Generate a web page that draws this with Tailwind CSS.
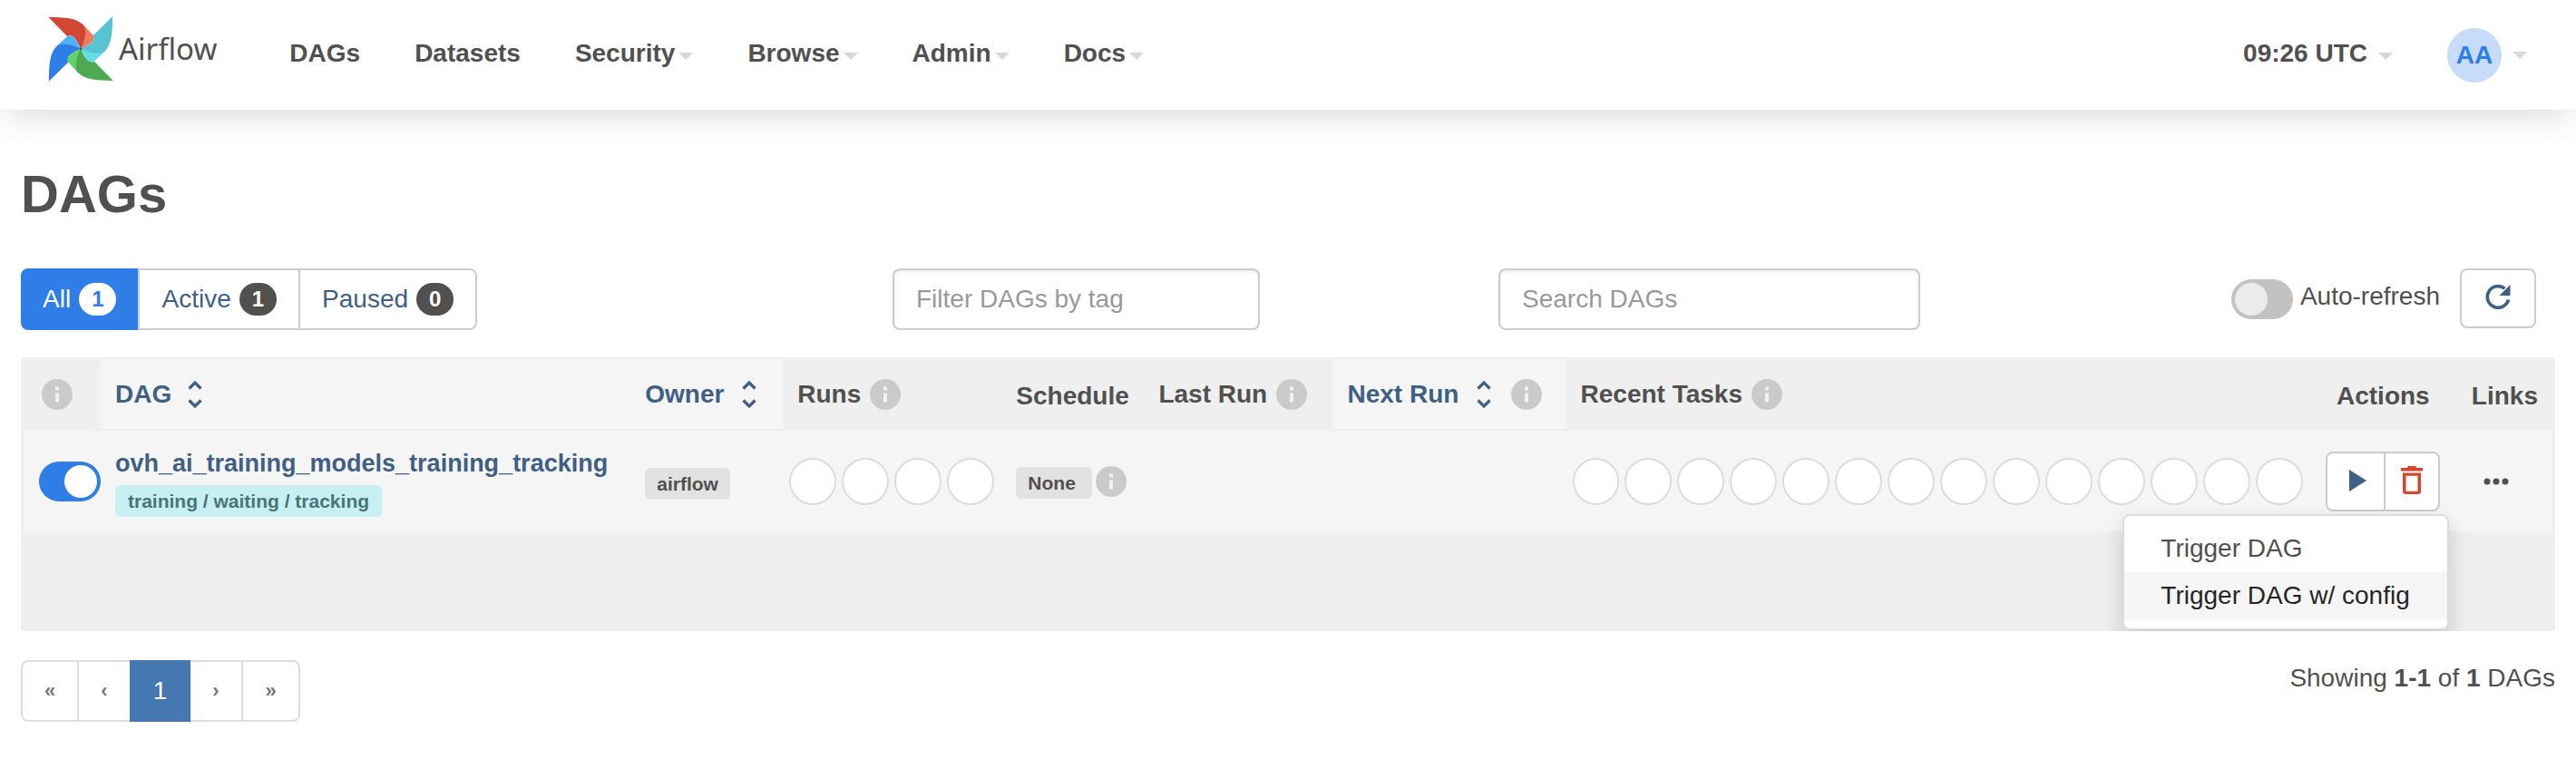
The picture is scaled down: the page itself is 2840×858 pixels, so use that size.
<!DOCTYPE html>
<html lang="en">
<head>
<meta charset="utf-8">
<meta name="viewport" content="width=device-width, initial-scale=1">
<title>DAGs - Airflow</title>
<script src="https://cdn.jsdelivr.net/npm/@tailwindcss/browser@4"></script>
</head>
<body class="min-h-screen bg-white font-['Liberation_Sans',Arial,sans-serif] text-[28px] leading-10 text-[#51504f]">

<svg class="hidden" aria-hidden="true">
  <symbol id="info" viewBox="0 0 34 34">
    <circle cx="17" cy="17" r="17" fill="#cacaca"/>
    <path d="M15 8.500h4v4h-4zM15 15.500h4v10h-4z" fill="#f1f1f1"/>
  </symbol>
  <symbol id="caret" viewBox="0 0 16 8"><path d="M0 0h16L8 8z" fill="#dfd3e0"/></symbol>
  <symbol id="sort" viewBox="0 0 16 30">
    <path d="M1.500 8.500 8 2 14.500 8.500M1.500 21.500 8 28 14.500 21.500" fill="none" stroke="#3f5f84" stroke-width="3.200"/>
  </symbol>
</svg>

<header class="relative flex h-[121px] items-center justify-between bg-white pr-[54px] pl-[53px] shadow-[0_10px_36px_-8px_rgba(80,80,70,0.26)]">
  <div class="flex items-center">
    <a href="#" class="mr-20 flex items-center gap-[6px] pb-[14px]" aria-label="Airflow home">
      <svg class="size-[72px]" viewBox="71 54 212 213" aria-hidden="true">
        <g>
          <path d="M188 84 221 120Q222 142 177 160Z" fill="#ee7b62"/>
          <path d="M71 56C130 57 164 59 188 84C197 108 191 132 177 160Q162 122 145 117Q138 115 133 119Z" fill="#d1472f"/>
        </g>
        <g transform="rotate(90 177 160)">
          <path d="M188 84 221 120Q222 142 177 160Z" fill="#66dfec"/>
          <path d="M71 56C130 57 164 59 188 84C197 108 191 132 177 160Q162 122 145 117Q138 115 133 119Z" fill="#58c4d1"/>
        </g>
        <g transform="rotate(180 177 160)">
          <path d="M188 84 221 120Q222 142 177 160Z" fill="#5fd168"/>
          <path d="M71 56C130 57 164 59 188 84C197 108 191 132 177 160Q162 122 145 117Q138 115 133 119Z" fill="#4fa852"/>
        </g>
        <g transform="rotate(270 177 160)">
          <path d="M188 84 221 120Q222 142 177 160Z" fill="#4fb2f9"/>
          <path d="M71 56C130 57 164 59 188 84C197 108 191 132 177 160Q162 122 145 117Q138 115 133 119Z" fill="#2f7de6"/>
        </g>
        <circle cx="177" cy="160" r="4" fill="#51504f"/>
      </svg>
      <span class="font-['Noto_Sans',sans-serif] text-[33px]">Airflow</span>
    </a>
    <nav class="flex items-center gap-[60px] pb-1 font-bold" aria-label="Main">
      <a href="#">DAGs</a>
      <a href="#">Datasets</a>
      <a href="#" class="flex items-center gap-1">Security<svg class="mt-[6px] h-2 w-4"><use href="#caret"/></svg></a>
      <a href="#" class="flex items-center gap-1">Browse<svg class="mt-[6px] h-2 w-4"><use href="#caret"/></svg></a>
      <a href="#" class="flex items-center gap-1">Admin<svg class="mt-[6px] h-2 w-4"><use href="#caret"/></svg></a>
      <a href="#" class="flex items-center gap-1">Docs<svg class="mt-[6px] h-2 w-4"><use href="#caret"/></svg></a>
    </nav>
  </div>
  <div class="flex items-center gap-[60px] font-bold">
    <button type="button" class="flex items-center gap-3 pb-1">09:26 UTC<svg class="mt-[6px] h-2 w-4"><use href="#caret"/></svg></button>
    <button type="button" class="flex items-center gap-3" aria-label="User menu">
      <span class="flex size-[60px] items-center justify-center rounded-full bg-[#c6dcf9] text-[#2f7de6]">AA</span>
      <svg class="h-2 w-4"><use href="#caret"/></svg>
    </button>
  </div>
</header>

<main class="px-[23px] pt-[61px]">
  <h1 class="mb-[50px] text-[58px] leading-16 font-bold">DAGs</h1>

  <div class="mb-[30px] grid grid-cols-[961fr_668fr_1165fr] items-start">
    <div class="flex h-[68px] w-fit overflow-hidden rounded-lg text-[#3f5f84]">
      <a href="#" class="flex items-center gap-[9px] bg-[#2f7de6] px-6 text-white">All<span class="rounded-full bg-white px-[14px] text-[24px] leading-9 font-bold text-[#2f7de6]">1</span></a>
      <a href="#" class="flex items-center gap-[9px] border-2 border-[#ccc] px-6">Active<span class="rounded-full bg-[#51504f] px-[14px] text-[24px] leading-9 font-bold text-white">1</span></a>
      <a href="#" class="flex items-center gap-[9px] rounded-r-lg border-2 border-l-0 border-[#ccc] px-6">Paused<span class="rounded-full bg-[#51504f] px-[14px] text-[24px] leading-9 font-bold text-white">0</span></a>
    </div>
    <input type="text" aria-label="Filter DAGs by tag" placeholder="Filter DAGs by tag" class="h-[68px] w-[405px] rounded-lg border-2 border-[#ccc] px-6 shadow-[inset_0_2px_3px_rgba(0,0,0,0.08)] placeholder:text-[#999]">
    <div class="flex items-start justify-between pr-[21px]">
      <input type="search" aria-label="Search DAGs" placeholder="Search DAGs" class="h-[68px] w-[465px] rounded-lg border-2 border-[#ccc] px-6 shadow-[inset_0_2px_3px_rgba(0,0,0,0.08)] placeholder:text-[#999]">
      <div class="flex h-[66px] items-center gap-[22px]">
        <label class="flex items-center gap-2">
          <input type="checkbox" class="mt-[2px] h-11 w-[68px] appearance-none rounded-full bg-[#c3c2c1] p-1 before:block before:size-9 before:rounded-full before:bg-[#ebebeb]">
          <span class="-mt-1">Auto-refresh</span>
        </label>
        <button type="button" aria-label="Refresh" class="flex h-[66px] w-[84px] items-center justify-center rounded-lg border-2 border-[#ccc] pb-1">
          <svg class="size-7" viewBox="0 0 28 28" aria-hidden="true">
            <path d="M25.500 17.500A11.800 11.800 0 1 1 21.500 5.200" fill="none" stroke="#3f5f84" stroke-width="3.600"/>
            <path d="M27.500 1v12h-12z" fill="#3f5f84"/>
          </svg>
        </button>
      </div>
    </div>
  </div>

  <div class="overflow-hidden rounded-t-sm bg-[#efefef] px-1 pt-[2px] pb-[110px]">
    <table class="w-full table-fixed border-collapse text-left">
      <colgroup>
        <col class="w-[84px]"><col class="w-[584px]"><col class="w-[168px]"><col class="w-[241px]"><col class="w-[157px]"><col class="w-[208px]"><col class="w-[257px]"><col class="w-[819px]"><col class="w-[163px]"><col class="w-[104px]">
      </colgroup>
      <thead class="whitespace-nowrap">
        <tr class="h-[78px] border-b-2 border-[#efefef]">
          <th class="pl-[19px]"><svg class="size-[34px]" role="img" aria-label="Pause or unpause a DAG"><use href="#info"/></svg></th>
          <th class="bg-[#f5f5f5] px-4"><a href="#" class="flex items-center gap-[18px] text-[#3f5f84]">DAG<svg class="h-[30px] w-4"><use href="#sort"/></svg></a></th>
          <th class="bg-[#f5f5f5] px-4"><a href="#" class="flex items-center gap-5 text-[#3f5f84]">Owner<svg class="h-[30px] w-4"><use href="#sort"/></svg></a></th>
          <th class="px-4"><span class="flex items-center gap-[10px]">Runs<svg class="size-[34px]"><use href="#info"/></svg></span></th>
          <th class="px-4 pt-1">Schedule</th>
          <th class="px-4"><span class="flex items-center gap-[10px]">Last Run<svg class="size-[34px]"><use href="#info"/></svg></span></th>
          <th class="bg-[#f5f5f5] px-4"><span class="flex items-center gap-[22px]"><a href="#" class="flex items-center gap-5 text-[#3f5f84]">Next Run<svg class="h-[30px] w-4"><use href="#sort"/></svg></a><svg class="size-[34px]"><use href="#info"/></svg></span></th>
          <th class="px-4"><span class="flex items-center gap-[10px]">Recent Tasks<svg class="size-[34px]"><use href="#info"/></svg></span></th>
          <th class="pt-1 text-center">Actions</th>
          <th class="px-4 pt-1">Links</th>
        </tr>
      </thead>
      <tbody>
        <tr class="h-28 bg-[#f5f5f5]">
          <td class="pl-4"><input type="checkbox" checked aria-label="Pause or unpause ovh_ai_training_models_training_tracking" class="block h-11 w-[68px] appearance-none rounded-full bg-[#2f7de6] p-1 before:ml-6 before:block before:size-9 before:rounded-full before:bg-white"></td>
          <td class="px-4 pt-1">
            <div class="flex flex-col items-start gap-2">
              <a href="#" class="text-[27px] leading-8 font-bold text-[#3f5f84]">ovh_ai_training_models_training_tracking</a>
              <a href="#" class="rounded-md bg-[#c8f0f2] px-[14px] text-[21px] leading-[35px] font-bold text-[#467678]">training / waiting / tracking</a>
            </div>
          </td>
          <td class="px-4 pt-[6px]"><a href="#" class="block w-fit rounded-md bg-[#e2e2e2] px-[13px] text-[21px] leading-[35px] font-bold">airflow</a></td>
          <td class="px-[7px]">
            <div class="flex gap-[6px]">
              <span class="size-13 rounded-full border-2 border-[#ddd] bg-white"></span><span class="size-13 rounded-full border-2 border-[#ddd] bg-white"></span><span class="size-13 rounded-full border-2 border-[#ddd] bg-white"></span><span class="size-13 rounded-full border-2 border-[#ddd] bg-white"></span>
            </div>
          </td>
          <td class="px-4"><div class="flex items-center gap-1"><a href="#" class="mt-1 w-21 rounded-md bg-[#e2e2e2] px-[13px] text-[21px] leading-[35px] font-bold">None</a><svg class="size-[34px]"><use href="#info"/></svg></div></td>
          <td></td>
          <td></td>
          <td class="px-[7px]">
            <div class="flex gap-[6px]">
              <span class="size-13 rounded-full border-2 border-[#ddd] bg-white"></span><span class="size-13 rounded-full border-2 border-[#ddd] bg-white"></span><span class="size-13 rounded-full border-2 border-[#ddd] bg-white"></span><span class="size-13 rounded-full border-2 border-[#ddd] bg-white"></span><span class="size-13 rounded-full border-2 border-[#ddd] bg-white"></span><span class="size-13 rounded-full border-2 border-[#ddd] bg-white"></span><span class="size-13 rounded-full border-2 border-[#ddd] bg-white"></span><span class="size-13 rounded-full border-2 border-[#ddd] bg-white"></span><span class="size-13 rounded-full border-2 border-[#ddd] bg-white"></span><span class="size-13 rounded-full border-2 border-[#ddd] bg-white"></span><span class="size-13 rounded-full border-2 border-[#ddd] bg-white"></span><span class="size-13 rounded-full border-2 border-[#ddd] bg-white"></span><span class="size-13 rounded-full border-2 border-[#ddd] bg-white"></span><span class="size-13 rounded-full border-2 border-[#ddd] bg-white"></span>
            </div>
          </td>
          <td>
            <div class="relative mx-auto flex h-[66px] w-[126px] rounded-lg border-2 border-[#ccc] bg-white">
              <button type="button" aria-label="Trigger DAG" class="flex flex-1 items-center justify-center border-r-2 border-[#ccc] pb-[2px] pl-1">
                <svg class="h-6 w-5" viewBox="0 0 20 24" aria-hidden="true"><path d="M1 0v24L20 12z" fill="#3f5f84"/></svg>
              </button>
              <button type="button" aria-label="Delete DAG" class="flex flex-1 items-center justify-center pb-[2px]">
                <svg class="h-[31px] w-6" viewBox="0 0 24 31" aria-hidden="true"><path d="M0 2h6.500L8 0h8l1.500 2H24v3.500H0zM2 7.500h20V28a3 3 0 0 1-3 3H5a3 3 0 0 1-3-3zM5.500 10.800v17h13v-17z" fill-rule="evenodd" fill="#d6452d"/></svg>
              </button>
              <ul class="absolute top-[67px] -right-3 z-10 w-[360px] rounded-lg border-2 border-[#dcdcdc] bg-white py-[10px] leading-[52px] whitespace-nowrap shadow-[0_12px_24px_rgba(0,0,0,0.175)]">
                <li><a href="#" class="block px-10">Trigger DAG</a></li>
                <li><a href="#" class="block bg-[#f5f5f5] px-10 text-[#262626]">Trigger DAG w/ config</a></li>
              </ul>
            </div>
          </td>
          <td class="px-[29px]">
            <button type="button" aria-label="Links" class="block"><svg class="h-2 w-7" viewBox="0 0 28 8" aria-hidden="true"><g fill="#51504f"><circle cx="4" cy="4" r="3.500"/><circle cx="14" cy="4" r="3.500"/><circle cx="24" cy="4" r="3.500"/></g></svg></button>
          </td>
        </tr>
      </tbody>
    </table>
  </div>

  <div class="mt-8 flex items-start justify-between">
    <nav aria-label="Pagination" class="flex h-[68px] text-center leading-16">
      <a href="#" aria-label="First page" class="w-16 rounded-l-lg border-2 border-[#ddd] text-[22px] font-bold text-[#777]">«</a>
      <a href="#" aria-label="Previous page" class="w-14 border-y-2 border-[#ddd] text-[22px] font-bold text-[#777]">‹</a>
      <a href="#" aria-current="page" class="w-[67px] border-y-2 border-[#4577b0] bg-[#4577b0] text-white">1</a>
      <a href="#" aria-label="Next page" class="w-14 border-y-2 border-[#ddd] text-[22px] font-bold text-[#777]">›</a>
      <a href="#" aria-label="Last page" class="w-[65px] rounded-r-lg border-2 border-[#ddd] text-[22px] font-bold text-[#777]">»</a>
    </nav>
    <p>Showing <strong>1-1</strong> of <strong>1</strong> DAGs</p>
  </div>
</main>
</body>
</html>
